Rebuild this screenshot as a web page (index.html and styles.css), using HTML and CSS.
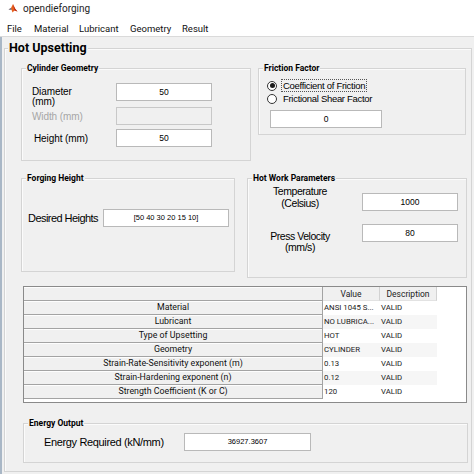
FILE: index.html
```html
<!DOCTYPE html>
<html>
<head>
<meta charset="utf-8">
<link rel="stylesheet" href="styles.css">
</head>
<body>
<div class="titlebar">
  <svg class="appicon" width="10" height="10" viewBox="0 0 10 10">
    <path d="M0.5 6.5 L3 5 L5 1 L7 5.5 L9.5 8.5 L6.5 7.5 L4.5 9.5 L3.5 6.8 Z" fill="#e8601c"/>
    <path d="M5 1 L7 5.5 L9.5 8.5 L6.5 7.5 Z" fill="#b8281a"/>
    <path d="M0.5 6.5 L3 5 L3.5 6.8 Z" fill="#4a7fb0"/>
  </svg>
  <span class="apptitle">opendieforging</span>
</div>
<div class="menubar">
  <span class="mi m1">File</span>
  <span class="mi m2">Material</span>
  <span class="mi m3">Lubricant</span>
  <span class="mi m4">Geometry</span>
  <span class="mi m5">Result</span>
</div>
<div class="window">
  <div class="panel main">
    <div class="ptitle big">Hot Upsetting</div>

    <div class="row row1">
      <div class="panel cyl">
        <div class="ptitle">Cylinder Geometry</div>
        <div class="frow">
          <div class="lbl lbl-dia">Diameter<br>(mm)</div>
          <div class="edit">50</div>
        </div>
        <div class="frow r2">
          <div class="lbl disabled">Width (mm)</div>
          <div class="edit off"></div>
        </div>
        <div class="frow r3">
          <div class="lbl lbl-h">Height (mm)</div>
          <div class="edit">50</div>
        </div>
      </div>

      <div class="panel fric">
        <div class="ptitle">Friction Factor</div>
        <div class="radio">
          <span class="rcirc on"></span><span class="rtext focus">Coefficient of Friction</span>
        </div>
        <div class="radio">
          <span class="rcirc"></span><span class="rtext">Frictional Shear Factor</span>
        </div>
        <div class="edit fedit">0</div>
      </div>
    </div>

    <div class="row row2">
      <div class="panel forg">
        <div class="ptitle">Forging Height</div>
        <div class="frow">
          <div class="lbl lbl-des">Desired Heights</div>
          <div class="edit wide">[50 40 30 20 15 10]</div>
        </div>
      </div>

      <div class="panel hot">
        <div class="ptitle">Hot Work Parameters</div>
        <div class="hrow">
          <div class="hlbl">Temperature<br>(Celsius)</div>
          <div class="edit hedit">1000</div>
        </div>
        <div class="hrow hr2">
          <div class="hlbl">Press Velocity<br>(mm/s)</div>
          <div class="edit hedit">80</div>
        </div>
      </div>
    </div>

    <div class="table">
      <div class="trow thead">
        <div class="rh"></div>
        <div class="ch">Value</div>
        <div class="ch">Description</div>
      </div>
      <div class="trow"><div class="rh">Material</div><div class="td">ANSI 1045 S...</div><div class="td">VALID</div></div>
      <div class="trow alt"><div class="rh">Lubricant</div><div class="td">NO LUBRICA...</div><div class="td">VALID</div></div>
      <div class="trow"><div class="rh">Type of Upsetting</div><div class="td">HOT</div><div class="td">VALID</div></div>
      <div class="trow alt"><div class="rh">Geometry</div><div class="td">CYLINDER</div><div class="td">VALID</div></div>
      <div class="trow"><div class="rh">Strain-Rate-Sensitivity exponent (m)</div><div class="td">0.13</div><div class="td">VALID</div></div>
      <div class="trow alt"><div class="rh">Strain-Hardening exponent (n)</div><div class="td">0.12</div><div class="td">VALID</div></div>
      <div class="trow"><div class="rh">Strength Coefficient (K or C)</div><div class="td">120</div><div class="td">VALID</div></div>
    </div>

    <div class="panel energy">
      <div class="ptitle">Energy Output</div>
      <div class="frow">
        <div class="lbl lbl-en">Energy Required (kN/mm)</div>
        <div class="edit eedit">36927.3607</div>
      </div>
    </div>
  </div>
</div>
</body>
</html>
```

FILE: styles.css
```css
* { box-sizing: border-box; }
html, body { margin: 0; padding: 0; }
body {
  width: 474px;
  height: 474px;
  overflow: hidden;
  background: #ffffff;
  font-family: "Liberation Sans", Arial, sans-serif;
  color: #000;
}

.titlebar {
  height: 17px;
  background: #fff;
  display: flex;
  align-items: center;
  padding-left: 8px;
}
.appicon { display: block; margin-top: -1px; }
.apptitle {
  font-family: Roboto, "Open Sans", sans-serif;
  font-size: 10px;
  margin-left: 5px;
  color: #222;
}

.menubar {
  height: 20px;
  background: #fff;
  display: flex;
  align-items: center;
  padding-left: 7px;
  padding-top: 3px;
  border-bottom: 1px solid #dadada;
  font-family: Roboto, "Open Sans", sans-serif;
  font-size: 9.5px;
  color: #111;
}
.mi { display: block; }
.m1 { width: 27px; }
.m2 { width: 45px; }
.m3 { width: 51px; }
.m4 { width: 52px; }
.m5 { width: 40px; }

.window {
  height: 437px;
  background: #f0f0f0;
  border-left: 2px solid #a9b7c6;
  padding-left: 2px;
  padding-top: 11px;
}

.panel {
  position: relative;
  border: 1px solid #d4d4d4;
  box-shadow: inset 1px 1px 0 #fbfbfb;
}
.ptitle {
  position: absolute;
  top: -6px;
  left: 4px;
  padding: 0 1px;
  background: #f0f0f0;
  font-family: Roboto, "Open Sans", sans-serif;
  font-weight: bold;
  font-size: 8.5px;
  line-height: 11px;
  white-space: nowrap;
}
.ptitle.big {
  top: -9px;
  left: 3px;
  font-size: 12.5px;
  line-height: 16px;
}

.main {
  width: 468px;
  height: 424px;
  padding-left: 16px;
  padding-top: 19px;
}

.row { display: flex; align-items: flex-start; }
.row2 { margin-top: 17px; }

/* Cylinder */
.cyl {
  width: 230px;
  height: 93px;
  padding: 14px 0 0 10px;
}
.frow { display: flex; align-items: center; height: 18px; }
.frow.r2 { margin-top: 6px; }
.frow.r3 { margin-top: 4px; }
.lbl {
  font-size: 10px;
  letter-spacing: -0.1px;
  width: 84px;
  white-space: nowrap;
}
.lbl-dia {
  align-self: flex-start;
  margin-top: 4px;
  line-height: 10px;
}
.lbl-dia-sub { font-size: 9px; }
.lbl-h { padding-left: 2px; }
.disabled { color: #a6a6a6; }

.edit {
  width: 96px;
  height: 18px;
  background: #fff;
  border: 1px solid #b9b9b9;
  font-family: "Liberation Sans", Arial, sans-serif;
  font-size: 8.5px;
  line-height: 16px;
  text-align: center;
  white-space: nowrap;
}
.edit.off { background: #f0f0f0; border-color: #c8c8c8; }

/* Friction */
.fric {
  width: 208px;
  height: 67px;
  margin-left: 7px;
  padding: 10px 0 0 8px;
}
.radio { display: flex; align-items: center; height: 13px; }
.rcirc {
  width: 10px;
  height: 10px;
  border: 1px solid #333;
  border-radius: 50%;
  background: #fff;
  position: relative;
}
.rcirc.on::after {
  content: "";
  position: absolute;
  left: 1.5px;
  top: 1.5px;
  width: 5px;
  height: 5px;
  border-radius: 50%;
  background: #1a1a1a;
}
.rtext {
  margin-left: 4px;
  padding: 0 1px;
  font-size: 9.5px;
  letter-spacing: -0.3px;
  line-height: 11px;
  border: 1px dotted transparent;
  white-space: nowrap;
}
.rtext.focus { border-color: #555; }
.fedit { width: 112px; margin-left: 3px; margin-top: 5px; }

/* Forging */
.forg {
  width: 214px;
  height: 94px;
  padding: 30px 0 0 6px;
}
.lbl-des {
  width: 75px;
  font-size: 11px;
  letter-spacing: -0.55px;
}
.edit.wide { width: 126px; font-size: 7.5px; }

/* Hot work */
.hot {
  width: 220px;
  height: 100px;
  margin-left: 12px;
  padding: 6px 0 0 10px;
}
.hrow { display: flex; align-items: flex-start; }
.hlbl {
  width: 84px;
  text-align: center;
  font-size: 10.5px;
  letter-spacing: -0.45px;
  line-height: 12px;
  white-space: nowrap;
}
.hedit { margin-left: 20px; margin-top: 8px; }
.hr2 { margin-top: 13px; }
.hr2 .hedit { margin-top: 0; }
.hr2 .hlbl { margin-top: 7px; line-height: 11px; }

/* Table */
.table {
  width: 444px;
  height: 117px;
  margin-left: 2px;
  margin-top: 8px;
  background: #fff;
  border: 1px solid #8a8a8a;
  font-family: Roboto, "Open Sans", sans-serif;
}
.trow { display: flex; height: 14px; }
.rh {
  width: 299px;
  height: 14px;
  background: #f0f0f0;
  border-bottom: 1px solid #a3a3a3;
  border-right: 1px solid #a3a3a3;
  box-shadow: inset 0 1px 0 #fdfdfd;
  font-size: 8.8px;
  line-height: 13px;
  text-align: center;
  white-space: nowrap;
  color: #111;
}
.ch {
  width: 57px;
  height: 14px;
  background: #f0f0f0;
  border-right: 1px solid #d2d2d2;
  border-bottom: 1px solid #e2e2e2;
  font-size: 8.5px;
  line-height: 14px;
  text-align: center;
  color: #222;
}
.td {
  width: 57px;
  font-size: 7.8px;
  line-height: 14px;
  padding-left: 1px;
  white-space: nowrap;
  overflow: hidden;
  color: #222;
}
.trow.alt .td { background: #f6f6f6; }

/* Energy */
.energy {
  width: 445px;
  height: 40px;
  margin-left: 2px;
  margin-top: 20px;
  padding: 9px 0 0 20px;
}
.lbl-en {
  width: 140px;
  font-size: 11px;
  letter-spacing: -0.35px;
}
.edit.eedit { width: 127px; font-size: 7.5px; }
```
